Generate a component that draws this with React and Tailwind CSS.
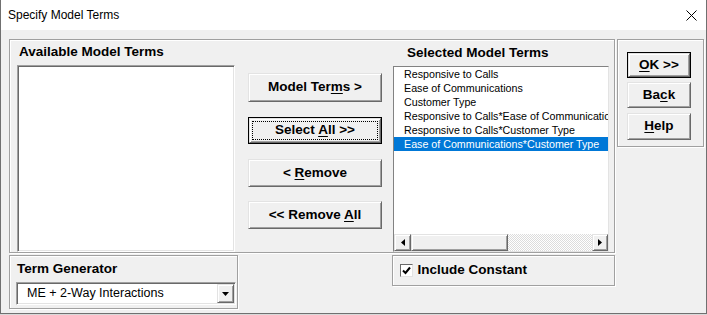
import React from 'react';

const raised =
  'border border-t-[#e3e3e3] border-l-[#e3e3e3] border-r-[#696969] border-b-[#696969] shadow-[inset_1px_1px_0_#ffffff,inset_-1px_-1px_0_#a0a0a0]';
const sunken =
  'border border-t-[#a0a0a0] border-l-[#a0a0a0] border-r-[#ffffff] border-b-[#ffffff] shadow-[inset_1px_1px_0_#696969,inset_-1px_-1px_0_#e3e3e3]';
const frame = 'border border-[#a0a0a0] shadow-[inset_1px_1px_0_#ffffff,1px_1px_0_#ffffff]';

const U = ({ children }) => <span className="underline underline-offset-[2px]">{children}</span>;

const Button = ({ children, className = '', isDefault = false, focused = false }) => {
  if (isDefault) {
    return (
      <div className={`border border-black bg-[#f0f0f0] ${className}`}>
        <div className={`relative h-full flex items-center justify-center text-[13.5px] font-bold text-black ${raised}`}>
          {focused && <div className="absolute inset-[2px] border border-dotted border-black" />}
          <span className="relative whitespace-pre">{children}</span>
        </div>
      </div>
    );
  }
  return (
    <div className={`flex items-center justify-center bg-[#f0f0f0] text-[13.5px] font-bold text-black ${raised} ${className}`}>
      <span className="whitespace-pre">{children}</span>
    </div>
  );
};

const ArrowLeft = () => (
  <svg width="4" height="7" viewBox="0 0 4 7">
    <path d="M4 0 L0 3.5 L4 7 Z" fill="#000" />
  </svg>
);

const ArrowRight = () => (
  <svg width="4" height="7" viewBox="0 0 4 7">
    <path d="M0 0 L4 3.5 L0 7 Z" fill="#000" />
  </svg>
);

const selectedTerms = [
  'Responsive to Calls',
  'Ease of Communications',
  'Customer Type',
  'Responsive to Calls*Ease of Communications',
  'Responsive to Calls*Customer Type',
  'Ease of Communications*Customer Type',
];

export default function App() {
  return (
    <div className="w-[707px] h-[315px] bg-[#d9d9d9] font-['Liberation_Sans',Arial,sans-serif] text-black">
      <div className="w-[707px] h-[314px] bg-[#f0f0f0] border border-t-0 border-[#707070] flex flex-col">
        {/* title bar */}
        <div className="h-[30px] bg-white flex items-center justify-between pl-[7px] pr-[9px]">
          <span className="text-[12px] text-black">Specify Model Terms</span>
          <svg width="11" height="11" viewBox="0 0 11 11">
            <path d="M0.5 0.5 L10.5 10.5 M10.5 0.5 L0.5 10.5" stroke="#000" strokeWidth="1" />
          </svg>
        </div>

        {/* body */}
        <div className="flex gap-[2px] pl-[8px] pt-[9px]">
          <div className="w-[606px] flex flex-col">
            {/* main frame */}
            <div className={`h-[214px] flex pl-[7px] ${frame}`}>
              <div className="w-[218px] flex flex-col">
                <div className="h-[25px] flex items-center pl-[2px] text-[13.5px] font-bold whitespace-nowrap">Available Model Terms</div>
                <div className={`flex-1 bg-white ${sunken}`} />
              </div>

              <div className="w-[134px] ml-[13px] flex flex-col">
                <Button className="mt-[33px] h-[29px]">
                  Model Ter<U>m</U>s &gt;
                </Button>
                <Button className="mt-[15px] h-[27px]" isDefault focused>
                  Select <U>A</U>ll &gt;&gt;
                </Button>
                <Button className="mt-[15px] h-[28px]">
                  &lt; <U>R</U>emove
                </Button>
                <Button className="mt-[14px] h-[28px]">
                  &lt;&lt; Remove <U>A</U>ll
                </Button>
              </div>

              <div className="w-[216px] ml-[11px] flex flex-col">
                <div className="h-[26px] flex items-center pl-[14px] text-[13.5px] font-bold whitespace-nowrap">Selected Model Terms</div>
                <div className="flex-1 flex flex-col bg-white border border-t-[#828282] border-l-[#828282] border-r-[#e3e3e3] border-b-[#e3e3e3]">
                  <div className="flex-1 overflow-hidden">
                    {selectedTerms.map((t, i) => (
                      <div
                        key={t}
                        className={`h-[14px] leading-[14px] pl-[10px] text-[10.7px] whitespace-nowrap ${
                          i === selectedTerms.length - 1 ? 'bg-[#0078d7] text-white' : 'text-black'
                        }`}
                      >
                        {t}
                      </div>
                    ))}
                  </div>
                  <div className="h-[17px] flex">
                    <div className={`w-[17px] flex items-center justify-center bg-[#f0f0f0] ${raised}`}>
                      <ArrowLeft />
                    </div>
                    <div className={`w-[97px] bg-[#f0f0f0] ${raised}`} />
                    <div className="flex-1 bg-[repeating-conic-gradient(#ffffff_0_25%,#dcdcdc_0_50%)] [background-size:2px_2px]" />
                    <div className={`w-[16px] flex items-center justify-center bg-[#f0f0f0] ${raised}`}>
                      <ArrowRight />
                    </div>
                  </div>
                </div>
              </div>
            </div>

            {/* bottom row */}
            <div className="mt-[2px] flex items-start">
              <div className={`w-[230px] h-[54px] flex flex-col pl-[6px] pr-[1px] ${frame}`}>
                <div className="h-[26px] flex items-center pl-[1px] text-[13.5px] font-bold">Term Generator</div>
                <div className={`h-[23px] flex items-center bg-white ${sunken}`}>
                  <span className="flex-1 pl-[10px] text-[12.5px] whitespace-nowrap">ME + 2-Way Interactions</span>
                  <div className={`w-[17px] h-[19px] mr-[1px] flex items-center justify-center bg-[#f0f0f0] ${raised}`}>
                    <svg width="7" height="4" viewBox="0 0 7 4">
                      <path d="M0 0 L7 0 L3.5 4 Z" fill="#000" />
                    </svg>
                  </div>
                </div>
              </div>

              <div className={`w-[223px] h-[31px] ml-[154px] flex items-center pl-[7px] ${frame}`}>
                <div className="w-[13px] h-[13px] bg-white border border-t-[#696969] border-l-[#696969] border-r-[#e3e3e3] border-b-[#e3e3e3] flex items-center justify-center">
                  <svg width="9" height="9" viewBox="0 0 9 9">
                    <path d="M1 4.5 L3.5 7 L8 1.5" stroke="#000" strokeWidth="2" fill="none" />
                  </svg>
                </div>
                <span className="ml-[4px] text-[13.5px] font-bold">Include Constant</span>
              </div>
            </div>
          </div>

          {/* right frame */}
          <div className={`w-[87px] h-[108px] flex flex-col pl-[9px] pt-[12px] ${frame}`}>
            <Button className="w-[64px] h-[26px]" isDefault>
              <U>O</U>K &gt;&gt;
            </Button>
            <Button className="w-[64px] h-[26px] mt-[4px]">
              Ba<U>c</U>k
            </Button>
            <Button className="w-[64px] h-[27px] mt-[5px]">
              <U>H</U>elp
            </Button>
          </div>
        </div>
      </div>
    </div>
  );
}
